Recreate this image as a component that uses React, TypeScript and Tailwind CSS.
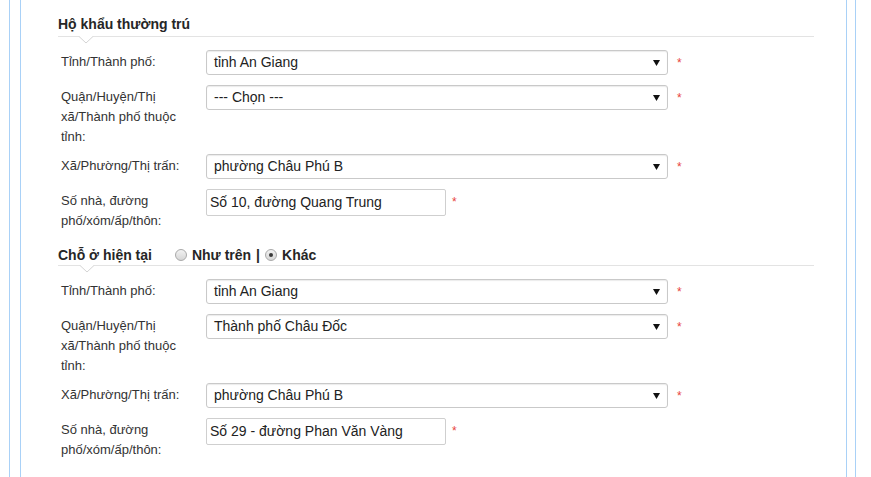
import React from "react";

type Row = {
  label: string;
  value: string;
  type: "select" | "input";
  multi?: boolean;
};

const section1: Row[] = [
  { label: "Tỉnh/Thành phố:", value: "tỉnh An Giang", type: "select" },
  {
    label: "Quận/Huyện/Thị xã/Thành phố thuộc tỉnh:",
    value: "--- Chọn ---",
    type: "select",
    multi: true,
  },
  { label: "Xã/Phường/Thị trấn:", value: "phường Châu Phú B", type: "select" },
  {
    label: "Số nhà, đường phố/xóm/ấp/thôn:",
    value: "Số 10, đường Quang Trung",
    type: "input",
  },
];

const section2: Row[] = [
  { label: "Tỉnh/Thành phố:", value: "tỉnh An Giang", type: "select" },
  {
    label: "Quận/Huyện/Thị xã/Thành phố thuộc tỉnh:",
    value: "Thành phố Châu Đốc",
    type: "select",
    multi: true,
  },
  { label: "Xã/Phường/Thị trấn:", value: "phường Châu Phú B", type: "select" },
  {
    label: "Số nhà, đường phố/xóm/ấp/thôn:",
    value: "Số 29 - đường Phan Văn Vàng",
    type: "input",
  },
];

const Notch = ({ left }: { left: string }) => (
  <svg
    className={`absolute top-full ${left}`}
    width="16"
    height="8"
    viewBox="0 0 16 8"
  >
    <polyline
      points="0.5,0 8,7 15.5,0"
      fill="white"
      stroke="#d4d4d4"
      strokeWidth="1"
    />
  </svg>
);

const Radio = ({ checked }: { checked?: boolean }) => (
  <span className="inline-flex w-[12px] h-[12px] rounded-full border border-[#a9a9a9] bg-gradient-to-b from-[#f2f2f2] to-[#d6d6d6] items-center justify-center">
    {checked && <span className="w-[4px] h-[4px] rounded-full bg-[#3a3a3a]" />}
  </span>
);

const Asterisk = ({ ml }: { ml: string }) => (
  <span className={`${ml} mt-[3px] text-[12px] leading-[20px] text-[#e8453c]`}>*</span>
);

const FieldRow = ({ row, last }: { row: Row; last: boolean }) => {
  const mb = last ? "mb-0" : row.multi ? "mb-[7px]" : "mb-[10px]";
  return (
    <div className={`flex items-start ${mb}`}>
      <label className="w-[148px] shrink-0 pl-[3px] pr-[15px] pt-[2px] text-[13px] leading-[20px] text-[#333]">
        {row.label}
      </label>
      {row.type === "select" ? (
        <>
          <div className="flex items-center w-[462px] h-[25px] border border-[#c9c9c9] rounded-[3px] bg-white shadow-[inset_0_1px_1px_rgba(0,0,0,0.08)] pl-[7px] pr-[7px]">
            <span className="flex-1 text-[14px] text-[#222]">{row.value}</span>
            <svg width="7" height="6" viewBox="0 0 7 6">
              <polygon points="0,0 7,0 3.5,6" fill="#111" />
            </svg>
          </div>
          <Asterisk ml="ml-[9px]" />
        </>
      ) : (
        <>
          <div className="flex items-center w-[240px] h-[27px] border border-[#cfcfcf] rounded-[2px] bg-white pl-[3px]">
            <span className="text-[14px] text-[#222]">{row.value}</span>
          </div>
          <Asterisk ml="ml-[6px]" />
        </>
      )}
    </div>
  );
};

export default function App() {
  return (
    <div className="h-[477px] w-[871px] bg-white pl-[9px] pr-[15px] font-['Liberation_Sans',Arial,sans-serif] overflow-hidden">
      <div className="h-full border-x border-[#a9d1f7] pl-[10px] pr-[8px]">
        <div className="h-full border-x border-[#a9d1f7] pl-[37px] pr-[32px] pt-[14px]">
          {/* Hộ khẩu thường trú */}
          <div className="relative border-b border-[#e3e3e3] pb-[2px]">
            <h3 className="text-[14px] leading-[20px] font-bold text-[#262626]">
              Hộ khẩu thường trú
            </h3>
            <Notch left="left-[20px]" />
          </div>
          <div className="mt-[13px]">
            {section1.map((r, i) => (
              <FieldRow key={i} row={r} last={i === section1.length - 1} />
            ))}
          </div>

          {/* Chỗ ở hiện tại */}
          <div className="relative mt-[14px] border-b border-[#e3e3e3]">
            <div className="flex items-center h-[20px] text-[14px] font-bold text-[#262626]">
              <span>Chỗ ở hiện tại</span>
              <span className="ml-[23px] flex items-center">
                <Radio />
              </span>
              <span className="ml-[5px]">Như trên</span>
              <span className="ml-[5px]">|</span>
              <span className="ml-[5px] flex items-center">
                <Radio checked />
              </span>
              <span className="ml-[5px]">Khác</span>
            </div>
            <Notch left="left-[21px]" />
          </div>
          <div className="mt-[13px]">
            {section2.map((r, i) => (
              <FieldRow key={i} row={r} last={i === section2.length - 1} />
            ))}
          </div>
        </div>
      </div>
    </div>
  );
}
